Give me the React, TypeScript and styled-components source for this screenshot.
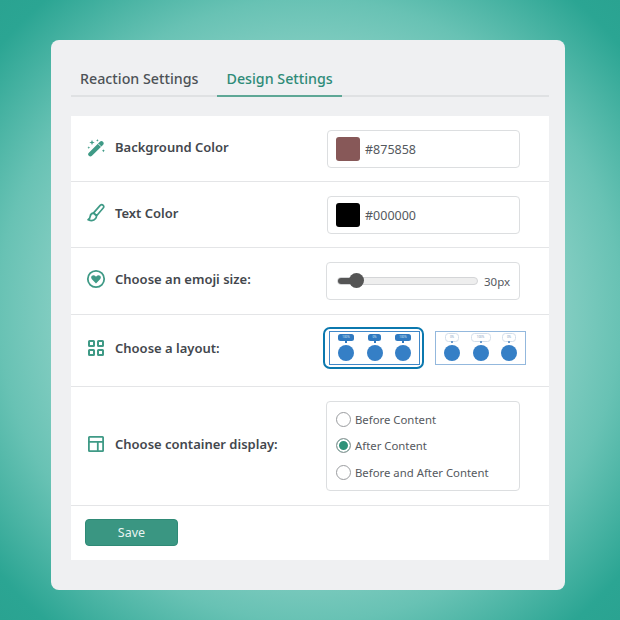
import React from 'react';
import styled, { createGlobalStyle } from 'styled-components';

const GlobalStyle = createGlobalStyle`
  html, body {
    margin: 0;
    padding: 0;
  }
  body {
    font-family: 'Noto Sans', 'Open Sans', sans-serif;
  }
`;

const Page = styled.div`
  width: 620px;
  height: 620px;
  box-sizing: border-box;
  padding: 40px 55px 30px 51px;
  background: radial-gradient(circle at 50% 50%, #d0ece6 0%, #80ccc0 59%, #68c2b4 71%, #2ba593 93%, #2aa391 100%);
`;

const Card = styled.div`
  height: 550px;
  box-sizing: border-box;
  padding: 22px 16px 30px 20px;
  background: #eff0f2;
  border-radius: 8px;
`;

const Tabs = styled.div`
  display: flex;
  height: 35px;
  box-sizing: border-box;
  border-bottom: 2px solid #dfe1e3;
  margin-bottom: 19px;
`;

const Tab = styled.div<{ $active?: boolean }>`
  height: 35px;
  box-sizing: border-box;
  padding: 0 9px;
  margin-right: ${(p) => (p.$active ? 0 : '10px')};
  font-size: 14.25px;
  font-weight: 500;
  line-height: 34px;
  white-space: nowrap;
  color: ${(p) => (p.$active ? '#2e8b78' : '#4d5257')};
  border-bottom: 2px solid ${(p) => (p.$active ? '#5ea796' : 'transparent')};
`;

const Panel = styled.div`
  background: #fff;
`;

const Row = styled.div<{ $height: number }>`
  display: flex;
  align-items: center;
  height: ${(p) => p.$height}px;
  box-sizing: border-box;
  padding-left: 15px;
  border-bottom: 1px solid #e4e5e7;
`;

const RowTitle = styled.div<{ $lift?: number }>`
  display: flex;
  align-items: center;
  margin-bottom: ${(p) => p.$lift ?? 4}px;
`;

const IconSlot = styled.div`
  width: 20px;
  height: 20px;
  margin-right: 9px;
  color: #3f9a86;
  flex-shrink: 0;
  svg {
    display: block;
  }
`;

const Label = styled.div`
  width: 212px;
  font-size: 13px;
  font-weight: 600;
  color: #43474d;
`;

const Field = styled.div`
  width: 193px;
  height: 38px;
  box-sizing: border-box;
  border: 1px solid #dcdee0;
  border-radius: 4px;
  display: flex;
  align-items: center;
  padding-left: 8px;
  font-size: 12.5px;
  color: #55595e;
`;

const FieldValue = styled.span`
  padding-top: 2px;
`;

const Swatch = styled.div<{ $color: string }>`
  width: 24px;
  height: 24px;
  border-radius: 3px;
  background: ${(p) => p.$color};
  margin-right: 5px;
`;

const SliderField = styled(Field)`
  margin-left: -1px;
  width: 194px;
  padding-left: 10px;
  font-size: 11.5px;
`;

const Track = styled.div`
  position: relative;
  width: 141px;
  height: 8px;
  border-radius: 4px;
  background: #eeeeee;
  border: 1px solid #d4d5d7;
  box-sizing: border-box;
  margin-right: 6px;
`;

const TrackFill = styled.div`
  width: 20px;
  height: 100%;
  border-radius: 4px;
  background: #555555;
`;

const Thumb = styled.div`
  position: absolute;
  left: 11px;
  top: -5px;
  width: 15px;
  height: 15px;
  border-radius: 50%;
  background: #555555;
`;

const LayoutList = styled.div`
  display: flex;
  align-items: center;
  margin: 0 0 6px -4px;
`;

const LayoutOption = styled.div<{ $selected?: boolean }>`
  box-sizing: border-box;
  width: 101px;
  height: 42px;
  display: flex;
  align-items: center;
  justify-content: center;
  border-radius: 7px;
  margin-right: 6px;
  padding-left: ${(p) => (p.$selected ? '2px' : 0)};
  border: 2px solid ${(p) => (p.$selected ? '#0b78ae' : 'transparent')};
`;

const LayoutPreview = styled.div<{ $selected?: boolean }>`
  box-sizing: border-box;
  flex-shrink: 0;
  width: 91px;
  height: 34px;
  display: flex;
  justify-content: space-between;
  align-items: flex-end;
  padding: 0 8px 3px;
  border: 1px solid ${(p) => (p.$selected ? '#3f87c8' : '#93b8dd')};
`;

const Reaction = styled.div`
  width: 16px;
  display: flex;
  flex-direction: column;
  align-items: center;
  gap: 4px;
`;

const Bubble = styled.div<{ $filled?: boolean; $width: number }>`
  position: relative;
  flex-shrink: 0;
  height: 7px;
  width: ${(p) => p.$width}px;
  box-sizing: border-box;
  border-radius: 2.5px;
  font-size: 3px;
  line-height: 7px;
  text-align: center;
  color: ${(p) => (p.$filled ? '#d7e7f6' : '#7d9cc0')};
  background: ${(p) => (p.$filled ? '#2f79c0' : '#fff')};
  outline: ${(p) => (p.$filled ? 'none' : '1px solid #d3deea')};
  &::after {
    content: '';
    position: absolute;
    left: 50%;
    bottom: -2px;
    width: 2px;
    height: 2px;
    margin-left: -1px;
    background: ${(p) => (p.$filled ? '#2f79c0' : '#6f9ccb')};
  }
`;

const Dot = styled.div`
  width: 16px;
  height: 16px;
  flex-shrink: 0;
  border-radius: 50%;
  background: #357fc6;
`;

const RadioBox = styled.div`
  width: 194px;
  height: 90px;
  margin-left: -1px;
  box-sizing: border-box;
  border: 1px solid #dcdee0;
  border-radius: 4px;
  display: flex;
  flex-direction: column;
  justify-content: center;
  gap: 8.5px;
  padding: 0 0 1px 9px;
`;

const RadioRow = styled.div`
  display: flex;
  align-items: center;
  height: 18px;
  font-size: 11.35px;
  color: #55595e;
`;

const RadioMark = styled.div<{ $checked?: boolean }>`
  width: 15px;
  height: 15px;
  box-sizing: border-box;
  border-radius: 50%;
  border: 1px solid #9a9c9f;
  margin-right: 4px;
  background: ${(p) => (p.$checked ? '#2f9279' : '#fff')};
  box-shadow: ${(p) => (p.$checked ? 'inset 0 0 0 2px #fff' : 'none')};
`;

const Footer = styled.div`
  height: 54px;
  padding: 13px 0 0 14px;
  box-sizing: border-box;
`;

const SaveButton = styled.button`
  display: block;
  width: 93px;
  height: 27px;
  padding: 0;
  background: #3a9682;
  border: 1px solid #2f8a76;
  border-radius: 4px;
  color: #e8f4f1;
  font-family: inherit;
  font-size: 12.5px;
`;

const WandIcon = () => (
  <svg width="20" height="20" viewBox="0 0 20 20" fill="currentColor">
    <path d="M4.4 17.2 15.4 6.4" stroke="currentColor" strokeWidth="4.4" strokeLinecap="round" />
    <path d="M12.2 6.8l3 3" stroke="#fff" strokeWidth="0.9" />
    <path d="M6 2.8 6.7 4.8l2 .7-2 .7L6 8.2l-.7-2-2-.7 2-.7ZM11.4 2l.4 1 1 .4-1 .4-.4 1-.4-1-1-.4 1-.4ZM2.8 9.2l.4 1 1 .4-1 .4-.4 1-.4-1-1-.4 1-.4ZM17.4 12.2l.5 1 1 .5-1 .5-.5 1-.5-1-1-.5 1-.5Z" />
  </svg>
);

const BrushIcon = () => (
  <svg width="20" height="20" viewBox="0 0 20 20" fill="none" stroke="currentColor" strokeWidth="1.7" strokeLinejoin="round" strokeLinecap="round">
    <path d="M14.2 2.4c.9-.8 2.2-.8 3 0s.6 2-.2 2.9l-6.4 7.4-3-2.8Z" />
    <path d="M7.4 10.2c-2.2.2-3 1.6-3.2 3.2-.1 1.3-.7 2.4-2.1 3.4 2.8 1.2 6 .9 7.5-1.2.8-1.1.9-2.3.7-3Z" />
  </svg>
);

const HeartCircleIcon = () => (
  <svg width="20" height="20" viewBox="0 0 20 20">
    <circle cx="10" cy="10" r="8.2" fill="none" stroke="currentColor" strokeWidth="1.8" />
    <path fill="currentColor" d="M10 14.4 5.9 10.3c-1-1.1-1-2.6 0-3.5 1-.9 2.6-.8 3.4.2l.7.8.7-.8c.8-1 2.4-1.1 3.4-.2 1 .9 1 2.4 0 3.5Z" />
  </svg>
);

const GridIcon = () => (
  <svg width="20" height="20" viewBox="0 0 20 20" fill="none" stroke="currentColor" strokeWidth="2">
    <rect x="3" y="3" width="5" height="5" rx="0.5" />
    <rect x="12" y="3" width="5" height="5" rx="0.5" />
    <rect x="3" y="12" width="5" height="5" rx="0.5" />
    <rect x="12" y="12" width="5" height="5" rx="0.5" />
  </svg>
);

const ContainerIcon = () => (
  <svg width="20" height="20" viewBox="0 0 20 20" fill="none" stroke="currentColor" strokeWidth="1.8">
    <rect x="2.9" y="2.9" width="14.2" height="14.2" rx="0.6" />
    <path d="M2.9 7.8h14.2M11.8 7.8v9.3" />
  </svg>
);

const previews = [
  { selected: true, bubbles: [{ text: '100%', width: 16 }, { text: '0%', width: 13 }, { text: '100%', width: 16 }] },
  { selected: false, bubbles: [{ text: '0%', width: 12 }, { text: '100%', width: 18 }, { text: '0%', width: 12 }] },
];

const radios = [
  { label: 'Before Content', checked: false },
  { label: 'After Content', checked: true },
  { label: 'Before and After Content', checked: false },
];

const App: React.FC = () => {
  return (
    <Page>
      <GlobalStyle />
      <Card>
        <Tabs>
          <Tab>Reaction Settings</Tab>
          <Tab $active>Design Settings</Tab>
        </Tabs>
        <Panel>
          <Row $height={66}>
            <RowTitle>
              <IconSlot><WandIcon /></IconSlot>
              <Label>Background Color</Label>
            </RowTitle>
            <Field>
              <Swatch $color="#875858" />
              <FieldValue>#875858</FieldValue>
            </Field>
          </Row>
          <Row $height={66}>
            <RowTitle>
              <IconSlot><BrushIcon /></IconSlot>
              <Label>Text Color</Label>
            </RowTitle>
            <Field>
              <Swatch $color="#000000" />
              <FieldValue>#000000</FieldValue>
            </Field>
          </Row>
          <Row $height={67}>
            <RowTitle>
              <IconSlot><HeartCircleIcon /></IconSlot>
              <Label>Choose an emoji size:</Label>
            </RowTitle>
            <SliderField>
              <Track>
                <TrackFill />
                <Thumb />
              </Track>
              30px
            </SliderField>
          </Row>
          <Row $height={72}>
            <RowTitle $lift={6}>
              <IconSlot><GridIcon /></IconSlot>
              <Label>Choose a layout:</Label>
            </RowTitle>
            <LayoutList>
              {previews.map((preview) => (
                <LayoutOption key={String(preview.selected)} $selected={preview.selected}>
                  <LayoutPreview $selected={preview.selected}>
                    {preview.bubbles.map((bubble, i) => (
                      <Reaction key={i}>
                        <Bubble $filled={preview.selected} $width={bubble.width}>{bubble.text}</Bubble>
                        <Dot />
                      </Reaction>
                    ))}
                  </LayoutPreview>
                </LayoutOption>
              ))}
            </LayoutList>
          </Row>
          <Row $height={119}>
            <RowTitle>
              <IconSlot><ContainerIcon /></IconSlot>
              <Label>Choose container display:</Label>
            </RowTitle>
            <RadioBox>
              {radios.map((radio) => (
                <RadioRow key={radio.label}>
                  <RadioMark $checked={radio.checked} />
                  {radio.label}
                </RadioRow>
              ))}
            </RadioBox>
          </Row>
          <Footer>
            <SaveButton>Save</SaveButton>
          </Footer>
        </Panel>
      </Card>
    </Page>
  );
};

export default App;
